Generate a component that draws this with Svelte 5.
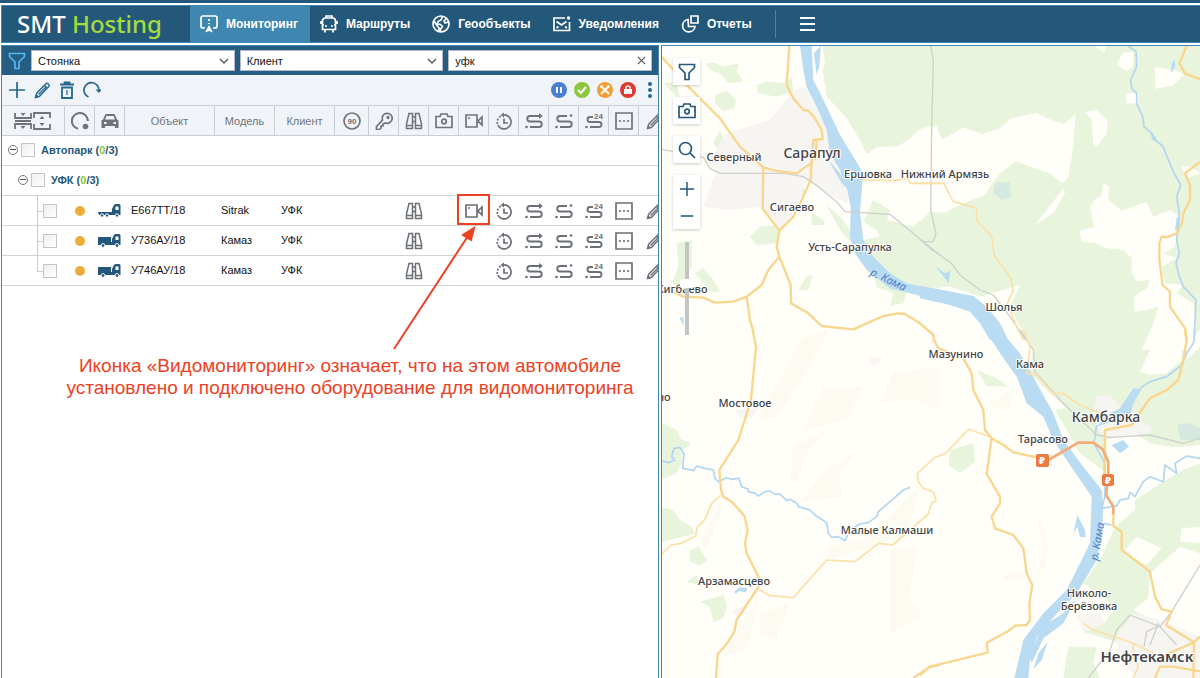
<script lang="ts">
    type Tile = {
        x: number
        y: number
        woods?: string[]
        clear?: string[]
        pale?: string[]
        urban?: string[]
        water?: string[]
        streams?: string[]
        minor?: string[]
        rails?: string[]
        roads?: string[]
        tolls?: string[]
    }

    const nav = [
        { icon: 'monitor', label: 'Мониторинг' },
        { icon: 'bus', label: 'Маршруты' },
        { icon: 'globe', label: 'Геообъекты' },
        { icon: 'mail', label: 'Уведомления' },
        { icon: 'report', label: 'Отчеты' }
    ]

    const columns = [
        { icon: 'speed', title: 'Скорость' },
        { icon: 'key', title: 'Зажигание' },
        { icon: 'binoculars', title: 'Следить' },
        { icon: 'camera', title: 'Фото' },
        { icon: 'video', title: 'Видеомониторинг' },
        { icon: 'history', title: 'История' },
        { icon: 'route', title: 'Маршрут' },
        { icon: 'track', title: 'Трек' },
        { icon: 'track24', title: 'Трек за сутки' },
        { icon: 'more', title: 'Ещё' },
        { icon: 'pencil', title: 'Изменить' }
    ]

    const vehicles = [
        { plate: 'Е667ТТ/18', model: 'Sitrak', client: 'УФК', truck: 'tractor', video: true },
        { plate: 'У736АУ/18', model: 'Камаз', client: 'УФК', truck: 'truck', video: false },
        { plate: 'У746АУ/18', model: 'Камаз', client: 'УФК', truck: 'truck', video: false }
    ]

    const hiddenInRow = ['speed', 'key', 'camera']

    let active = $state('Мониторинг')
    let query = $state('уфк')
    let zoom = $state(44)

    // Tile geometry is stored at three units per pixel
    const tiles: Tile[] = [
        {
            x: 660, y: 40,
            woods: [
                '488,18 840,18 840,255 810,258 775,270 745,300 715,318 650,322 620,342 600,300 560,235 530,200 500,170 488,90 495,70',
                '138,70 165,68 190,80 235,70 230,95 250,125 205,130 180,100 150,90',
                '165,165 200,152 228,180 222,205 190,213 165,190',
                '290,135 320,125 375,130 395,112 400,155 350,170 295,160',
                '298,275 340,262 395,270 402,300 380,325 340,330 300,300',
                '180,270 205,330 245,345 180,335 160,310',
                '335,440 370,428 425,430 440,460 400,480 385,500 340,470',
                '270,590 300,560 350,555 362,580 350,610 290,615',
                '500,495 540,530 570,570 575,610 540,570',
                '455,515 490,540 495,555 455,555',
                '415,750 440,708 458,705 445,750',
                '105,700 130,685 160,720 180,755 150,755',
                '50,610 95,600 95,680 60,740 35,730 55,680',
                '10,130 50,125 60,180 30,150',
                '640,480 690,510 680,540 760,560 800,520 840,510 840,745 760,740 700,715 650,680 610,600 660,590 650,570 610,545',
                '640,690 665,700 740,755 730,790 690,798 700,760 650,740'
            ],
            urban: ['385,170 420,140 480,150 500,230 560,330 600,400 560,490 500,460 440,420 410,500 360,575 310,500 200,510 130,500 150,440 170,390 120,340 160,345 200,280 330,240 370,190'],
            water: [
                '420,18 455,18 460,120 500,200 540,285 580,350 610,400 606,440 600,520 610,600 640,650 690,700 740,730 840,752 840,784 770,765 690,745 620,690 585,640 570,590 572,500 562,450 540,390 510,340 500,270 470,200 440,140 430,90',
                '482,18 478,80 470,105 462,40',
                '505,360 540,400 575,460 545,430'
            ],
            minor: ['605,420 700,422 740,415 752,430 840,430'],
            rails: [
                '5,328 40,335 130,352 150,385 180,400 375,400 430,410 475,440 530,485 555,515 690,523 790,605 840,645',
                '812,18 820,60 815,260 812,510 828,580 820,605 790,605'
            ],
            roads: [
                '5,50 80,135 180,235 240,320 310,382 350,393 410,400 455,368 460,300 488,297 485,270 465,235 445,212 430,210 400,175 380,135 388,18',
                '310,382 308,505 330,535 358,572 400,530 425,480 452,420 455,368',
                '462,300 470,300 466,360',
                '358,572 350,620 358,650 392,735 393,790 445,820 485,858 580,868 620,850 670,828 715,820 735,822 780,850 820,885 822,903',
                '358,650 325,690 305,735 260,770 220,785 165,788 130,773 70,770 40,755',
                '260,770 270,840 280,875'
            ]
        },
        {
            x: 920, y: 40,
            woods: ['30,18 840,18 840,900 320,900 270,800 300,735 180,770 90,740 30,740'],
            clear: [
                '0,268 50,255 65,300 130,262 188,282 240,265 275,235 350,218 380,235 430,252 467,222 462,290 455,350 445,410 427,430 390,400 287,365 240,400 210,440 195,465 130,490 75,518 30,515 0,545',
                '495,215 530,210 562,240 560,280 530,322 520,310 515,240',
                '608,38 640,35 638,80 620,95 600,80 590,72',
                '705,80 780,95 790,105 760,135 705,147',
                '618,160 655,160 655,190 620,190',
                '525,18 556,18 553,38',
                '478,572 522,560 510,500 522,480 545,465 550,430 568,440 565,480 605,512 680,485 700,530 750,510 785,535 775,560 765,620 730,640 770,655 725,680 735,730 790,735 770,760 820,790 835,930 665,930 700,850 715,800 680,810 645,815 640,770 680,745 690,720 650,725 635,700 635,655 610,630 560,625 530,610 485,605',
                '430,445 435,460 400,520 345,555 380,510',
                '785,380 815,380 840,400 800,415'
            ],
            water: [
                '0,737 70,750 160,768 200,800 240,850 265,900 210,900 180,850 150,815 90,795 0,775',
                '45,678 75,700 92,692 86,728',
                '755,70 765,58 765,80 753,100',
                '690,275 708,290 708,305 696,298',
                '770,535 782,530 775,570 765,570'
            ],
            streams: ['625,18 648,35 650,80 632,120 635,145 650,160 650,190 668,230 672,260 695,280 705,300 728,318 760,395 782,435 770,470 778,520 770,600 778,640 768,670 778,710 790,740 828,780 822,900'],
            minor: ['0,430 72,430 98,483 170,505 170,540 215,590 222,645 270,710 280,750 262,790 290,860 310,900'],
            rails: ['0,598 30,625 95,670 120,705 180,750 220,765 270,830 318,900'],
            roads: [
                '800,18 778,70 795,100 840,118',
                '840,365 795,400 810,435 810,480 790,520 785,550 770,580 740,592 725,590 718,610 718,660 728,735 750,755 750,800 795,865 800,900'
            ]
        },
        {
            x: 660, y: 330,
            woods: [
                '5,278 50,300 65,330 92,335 85,350 65,360 65,400 50,430 5,448',
                '5,532 40,540 60,570 95,590 107,612 60,622 5,638',
                '90,660 115,652 142,690 120,707 90,695',
                '80,755 110,735 115,765',
                '120,815 190,795 202,830 190,865 160,877 150,830'
            ],
            pale: [
                '290,270 430,20 510,0 400,190 350,260',
                '430,300 490,170 610,170 560,270',
                '390,455 400,350 500,300 440,370 410,455',
                '660,215 700,130 840,110 840,240 760,210',
                '420,515 490,430 590,360 540,430 545,500',
                '690,650 775,650 745,800 790,860 690,910',
                '120,640 190,500 180,560 140,655',
                '300,850 390,820 350,930 300,910',
                '180,980 300,800 260,960',
                '500,655 620,620 780,470 740,620 500,690'
            ],
            urban: ['225,240 290,235 275,265 240,262', '220,840 250,830 260,850 230,860', '625,82 668,85 640,110'],
            water: ['222,785 240,772 262,775 258,787 235,783 228,792', '58,-36 70,-40 72,-10'],
            streams: ['5,393 25,398 45,390 35,380 42,355 60,352 72,372 68,415 85,418 100,422 110,408 135,415 160,420 165,445 175,455 200,443 215,448 237,445 245,470 265,478 265,485 285,490 295,498 315,485 330,483 345,493 360,492 380,512 390,508 410,520 415,530 450,540 465,555 500,578 505,610 515,622 535,620 555,632 570,600 600,582 625,578 650,560 655,545 690,515 730,480 750,472'],
            minor: [
                '183,495 155,520 135,568 112,592 107,618 65,640 33,645 5,672',
                '297,778 330,797 400,803 500,690 585,695 655,640 698,645 805,552 815,520 828,512 820,485 790,475 775,455 772,430 825,382'
            ],
            roads: [
                '278,0 288,50 273,210 235,330 178,420 183,480 190,500 215,515 253,557 263,600 255,640 260,670 297,745 297,768 230,870 223,905 200,942 173,972 168,1044',
                '760,1044 810,1010 840,1005'
            ]
        },
        {
            x: 920, y: 330,
            woods: [
                '290,0 840,0 840,345 760,352 690,340 640,305 560,330 560,430 480,370 405,240 440,235 390,190 330,130 340,60',
                '840,400 790,420 730,455 645,510 645,540 585,590 545,680 490,760 590,830 555,875 490,905 600,940 600,900 680,860 690,730 780,650 840,670',
                '90,360 160,340 165,395 120,430 85,405',
                '170,120 230,145 265,170 200,168',
                '445,950 530,950 520,1000 540,1044 430,1044'
            ],
            clear: [
                '720,0 785,0 785,90 740,130 690,135 660,125 690,60',
                '800,40 840,0 840,50 800,90',
                '650,620 725,655 680,705 610,665',
                '785,595 840,590 840,640 780,635',
                '640,840 690,800 700,730 840,700 840,900 740,890'
            ],
            pale: ['250,740 310,720 310,745 250,750', '350,560 380,610 380,710 350,730 370,660', '200,230 280,170 270,240'],
            urban: [
                '530,200 570,195 600,230 640,270 695,290 690,310 560,320 535,300 520,250',
                '640,850 720,870 840,920 840,1044 650,1044 600,990 590,920',
                '470,855 540,850 555,880 490,908'
            ],
            water: [
                '195,0 240,0 300,70 400,250 430,330 490,410 545,480 550,530 545,620 530,690 470,790 420,840 350,920 330,990 325,1044 283,1044 310,930 370,850 440,780 480,700 510,640 515,500 440,390 400,330 370,260 320,220 290,140 240,70',
                '470,805 430,880 370,925 335,1000 328,980 365,890 430,850',
                '383,935 365,990 340,1018 355,970',
                '560,255 600,235 640,175 665,178 640,220 630,260 590,270 530,290',
                '472,555 495,600 497,622 480,620 472,590 460,612',
                '575,345 610,330 627,350 600,370',
                '400,270 418,300 400,305'
            ],
            streams: [
                '660,175 690,155 740,140 785,105 800,70 820,40 825,0',
                '545,535 590,528 600,510 625,505 630,487 645,500 670,455 690,440 730,455 735,405 770,430 765,400 800,378 840,385',
                '530,285 522,340 555,400 555,500 545,535',
                '550,580 575,585'
            ],
            minor: [
                '45,382 75,372 145,298 215,322',
                '310,0 330,50 320,130 350,135 400,190 430,190 480,225 530,245 555,270',
                '490,880 520,900 640,940 700,970',
                '640,940 640,980 655,1010 640,1044'
            ],
            rails: [
                '300,0 340,60 345,125 430,220 530,315 570,322 690,315 790,340 840,325',
                '840,705 755,845 720,890 630,855 590,900 570,960 505,1044',
                '720,885 680,905 672,950',
                '715,880 690,945',
                '720,890 770,945'
            ],
            roads: [
                '41,28 55,55 130,85 155,130 160,180 190,240 195,300 215,325 250,345 280,367 350,382',
                '215,325 210,360 200,432 240,500 240,520 215,560 225,595 280,615 310,655 320,730 337,765 328,820 330,870 320,885 285,887 270,900 200,938 203,968 30,1010 0,1035',
                '553,440 555,300 635,285 665,240 690,205 740,180 775,150 790,90 800,30 795,0',
                '580,550 580,588 605,605 605,660 690,725 705,800 725,838 755,845 738,885 822,937 840,920',
                '735,975 822,937 820,1044',
                '840,1024 760,1010 720,1010 705,1044'
            ],
            tolls: ['385,390 475,338 520,338 548,358 565,395 565,430 558,495 580,530 580,553']
        }
    ]

    const towns = [
        { name: 'Северный', x: 734, y: 161 },
        { name: 'Сарапул', x: 812, y: 158, size: 'town' },
        { name: 'Ершовка', x: 868, y: 178 },
        { name: 'Нижний Армязь', x: 945, y: 178 },
        { name: 'Сигаево', x: 792, y: 211 },
        { name: 'Усть-Сарапулка', x: 850, y: 251 },
        { name: 'Кигбаево', x: 682, y: 293 },
        { name: 'Шолья', x: 1004, y: 311 },
        { name: 'Мазунино', x: 956, y: 358 },
        { name: 'Кама', x: 1030, y: 368 },
        { name: 'Мостовое', x: 745, y: 407 },
        { name: 'но', x: 664, y: 401 },
        { name: 'Камбарка', x: 1106, y: 422, size: 'town' },
        { name: 'Тарасово', x: 1043, y: 443 },
        { name: 'Малые Калмаши', x: 887, y: 534 },
        { name: 'Арзамасцево', x: 734, y: 585 },
        { name: 'Николо-', x: 1089, y: 597 },
        { name: 'Берёзовка', x: 1089, y: 610 },
        { name: 'Нефтекамск', x: 1147, y: 662, size: 'city' }
    ]
</script>

{#snippet icon(name: string)}
    <svg class="icon" viewBox="0 0 18 18" aria-hidden="true">
        <use href="#i-{name}" />
        {#if name === 'speed'}<text class="glyph" x="9" y="12" text-anchor="middle">90</text>{/if}
        {#if name === 'track24'}<text class="glyph" x="9" y="7">24</text>{/if}
    </svg>
{/snippet}

{#snippet layer(key: string, tag: string)}
    {#each tiles as tile}
        <g class={key} transform="translate({tile.x} {tile.y}) scale({1 / 3})">
            {#each tile[key] ?? [] as points}
                {#if tag === 'area'}<polygon {points} />{:else}<polyline {points} />{/if}
            {/each}
        </g>
    {/each}
{/snippet}

<svg class="sprite" aria-hidden="true">
    <symbol id="i-monitor" viewBox="0 0 18 18">
        <path d="M5 13H3a2 2 0 0 1-2-2V3a2 2 0 0 1 2-2h12a2 2 0 0 1 2 2v8a2 2 0 0 1-2 2h-2M9 4v2M9 8v1" />
        <path class="solid" d="M9 10l4 7.500-4-1.500-4 1.500z" />
    </symbol>
    <symbol id="i-bus" viewBox="0 0 18 18">
        <path d="M6 2.500V1h6v1.500M5 3h8a3 3 0 0 1 2.500 3v8.500h-13V6A3 3 0 0 1 5 3zM2.500 10H4M14 10h1.500M1 6v3M17 6v3M5 15v2.500M13 15v2.500" />
        <circle class="solid" cx="6" cy="11" r="1" /><circle class="solid" cx="12" cy="11" r="1" />
    </symbol>
    <symbol id="i-globe" viewBox="0 0 18 18">
        <circle cx="9" cy="9" r="8" />
        <path d="M10.500 1.500L9 5l-3 1.500L5.500 9l3 .5 2 2-2 2.500v3M2 6l3 4.500L7 13v3.500M16.500 7L13 8l-1-2 2.500-2.500" />
    </symbol>
    <symbol id="i-mail" viewBox="0 0 18 18">
        <path d="M12 3H1v12.500h15.500V7M3.500 6.500L8.500 10l5-3.500M3.500 13l2-1.500M14 13l-2-1.500" />
        <circle class="solid" cx="15.500" cy="3" r="1.700" />
    </symbol>
    <symbol id="i-report" viewBox="0 0 18 18">
        <path d="M10 1h7v7h-7zM7 4.500a6.200 6.200 0 1 0 7 7H7.500z" />
    </symbol>
    <symbol id="i-filter" viewBox="0 0 18 18">
        <path d="M1.500 1.500h15v3L11 10v6.500H7V10L1.500 4.500z" />
    </symbol>
    <symbol id="i-plus" viewBox="0 0 18 18"><path d="M9 1v16M1 9h16" /></symbol>
    <symbol id="i-minus" viewBox="0 0 18 18"><path d="M2 9h14" /></symbol>
    <symbol id="i-pencil" viewBox="0 0 18 18">
        <path stroke-width="1.400" d="M2.500 16.500l1.200-4.300L13 2.800q1-1 2 0l.8.8q1 1 0 2L6.500 15.300zM11.500 4.500l2.700 2.700M5.500 13.500l7.500-7.500" />
        <path class="solid" d="M2 17l1-4 3.500 3z" />
    </symbol>
    <symbol id="i-trash" viewBox="0 0 18 18">
        <path stroke-width="1.800" d="M4 6.500h10V17H4zM2 3.500h14M6.500 3V1.500h5V3" /><path stroke-width="1.200" d="M9 9v5" />
    </symbol>
    <symbol id="i-refresh" viewBox="0 0 18 18">
        <path d="M5.500 16A7.500 7.500 0 1 1 16 9.500" /><path class="solid" d="M12.500 8.500h6L16 12z" />
    </symbol>
    <symbol id="i-ring" viewBox="0 0 18 18">
        <path stroke-width="2" d="M7 16.800A8 8 0 1 1 16.900 9" /><circle class="solid" cx="14.500" cy="14.500" r="2.800" />
    </symbol>
    <symbol id="i-car" viewBox="0 0 18 18">
        <path class="hole" fill-rule="evenodd" d="M4.500 2h9l2.500 5.500 1.500 1V16h-3.500v-2H4v2H.5V8.500l1.500-1zM5.500 4L4 7.500h10L12.500 4zM3 10v2h2.500v-2zM12.500 10v2H15v-2z" />
    </symbol>
    <symbol id="i-speed" viewBox="0 0 18 18"><circle cx="9" cy="9" r="8" /></symbol>
    <symbol id="i-key" viewBox="0 0 18 18">
        <path d="M7.500 8A5 5 0 1 1 10.500 11L8 12v2H6v2l-1.500 1.500H1.500v-3z" /><circle cx="13" cy="5.500" r=".8" />
    </symbol>
    <symbol id="i-binoculars" viewBox="0 0 18 18">
        <path stroke-width="1.500" d="M4 1.500h3.500v15h-6V12zM14 1.500h-3.500v15h6V12zM7.500 5h3M7.500 9.500h3M1.500 13.500h6M10.500 13.500h6" />
    </symbol>
    <symbol id="i-camera" viewBox="0 0 18 18">
        <path d="M1 4.500h4l1-2.500h6l1 2.500h4V15.500H1z" /><circle cx="9" cy="9.500" r="2.300" />
    </symbol>
    <symbol id="i-video" viewBox="0 0 18 18">
        <path d="M1 3h11v12H1zM13 9l4-4v8z" /><circle class="solid" cx="4" cy="6" r="1" />
    </symbol>
    <symbol id="i-history" viewBox="0 0 18 18">
        <path d="M8 3a7 7 0 1 1-5.200 10M9 6.500v4.500h4" />
        <path class="solid" d="M9 .5v5L5.500 3z" />
        <path stroke-dasharray="2 1.500" d="M2.500 12A7 7 0 0 1 6 4" />
    </symbol>
    <symbol id="i-route" viewBox="0 0 18 18">
        <path stroke-width="1.900" d="M15 4H5a2.700 2.700 0 0 0 0 5.500h9a2.700 2.700 0 0 1 0 5.500H5" />
        <path class="solid" d="M14 1l3.800 3L14 7z" /><circle class="solid" cx="1.500" cy="15" r="1.300" />
    </symbol>
    <symbol id="i-track" viewBox="0 0 18 18">
        <path stroke-width="1.900" d="M12 4H5a2.700 2.700 0 0 0 0 5.500h9a2.700 2.700 0 0 1 0 5.500H5" />
        <circle class="solid" cx="16" cy="3.500" r="1.300" /><circle class="solid" cx="1.500" cy="15" r="1.300" />
    </symbol>
    <symbol id="i-track24" viewBox="0 0 18 18">
        <path stroke-width="1.900" d="M8 5H5a2.300 2.300 0 0 0 0 5h9a2.500 2.500 0 0 1 0 5H5" />
        <circle class="solid" cx="1.500" cy="15" r="1.300" />
    </symbol>
    <symbol id="i-more" viewBox="0 0 18 18">
        <path d="M1 1h16v16H1z" />
        <circle class="solid" cx="5" cy="9" r="1.100" /><circle class="solid" cx="9" cy="9" r="1.100" /><circle class="solid" cx="13" cy="9" r="1.100" />
    </symbol>
    <symbol id="i-search" viewBox="0 0 18 18"><circle cx="7.500" cy="7.500" r="6" /><path d="M12 12l5 5" /></symbol>
    <symbol id="i-fold" viewBox="0 0 38 18">
        <path d="M1 1v5h16V1M1 17v-5h16v5M1 9h16M20 6V1h16v5M20 12v5h16v-5" />
        <path class="solid" d="M6.500 1h5L9 4zM6.500 14h5L9 17zM25.500 7h5L28 4zM25.500 11h5L28 14z" />
    </symbol>
    <symbol id="i-tractor" viewBox="0 0 24 14">
        <path class="body" d="M0 8h14V5l2-4q.3-1 2-1h3q1.500 0 1.500 1.500V11H1z" /><path class="gap" d="M17.500 2.500h3V6h-3z" />
        <circle class="wheel" cx="4" cy="11.500" r="1.700" /><circle class="wheel" cx="9" cy="11.500" r="1.700" /><circle class="wheel" cx="19" cy="11.500" r="1.700" />
    </symbol>
    <symbol id="i-truck" viewBox="0 0 24 14">
        <path class="body" d="M0 3h13v5h1V5l2-4q.3-1 2-1h3q1.500 0 1.500 1.500V11H0z" /><path class="gap" d="M17.500 2.500h3V6h-3z" />
        <circle class="wheel" cx="5" cy="11.500" r="1.900" /><circle class="wheel" cx="19" cy="11.500" r="1.900" />
    </symbol>
</svg>

<div class="app">
    <header class="top">
        <a class="logo" href="/">SMT <span>Hosting</span></a>
        <nav>
            {#each nav as item}
                <button class="nav-item" class:active={active === item.label} onclick={() => (active = item.label)}>
                    {@render icon(item.icon)}
                    {item.label}
                </button>
            {/each}
        </nav>
        <button class="burger" aria-label="Меню"><span></span><span></span><span></span></button>
    </header>

    <main>
        <section class="panel">
            <!-- Filters -->
            <div class="filters">
                {@render icon('filter')}
                <label class="field">
                    <select aria-label="Статус"><option>Стоянка</option></select>
                    <svg class="chevron" viewBox="0 0 10 6"><path d="M1 1l4 4 4-4" /></svg>
                </label>
                <label class="field">
                    <select aria-label="Группировка"><option>Клиент</option></select>
                    <svg class="chevron" viewBox="0 0 10 6"><path d="M1 1l4 4 4-4" /></svg>
                </label>
                <div class="field">
                    <input type="text" aria-label="Поиск" spellcheck="false" bind:value={query} />
                    <button class="clear-btn" aria-label="Очистить" onclick={() => (query = '')}>
                        <svg viewBox="0 0 10 10"><path d="M1 1l8 8M9 1L1 9" /></svg>
                    </button>
                </div>
            </div>

            <!-- Toolbar -->
            <div class="toolbar">
                <button aria-label="Добавить">{@render icon('plus')}</button>
                <button aria-label="Изменить">{@render icon('pencil')}</button>
                <button aria-label="Удалить">{@render icon('trash')}</button>
                <button aria-label="Обновить">{@render icon('refresh')}</button>
                <div class="states">
                    <button class="state pause" aria-label="Пауза"><svg viewBox="0 0 16 16"><path d="M6 5v6M10 5v6" /></svg></button>
                    <button class="state ok" aria-label="Работает"><svg viewBox="0 0 16 16"><path d="M4 8l3 3 5-6" /></svg></button>
                    <button class="state repair" aria-label="Ремонт"><svg viewBox="0 0 16 16"><path d="M4 4l8 8M12 4l-8 8M3.500 5.500l2-2M10.500 3.500l2 2" /></svg></button>
                    <button class="state lock" aria-label="Блокировка"><svg viewBox="0 0 16 16"><path class="white" d="M4 7h8v5H4z" /><path class="thin" d="M6 7V5q2-2 4 0v2" /></svg></button>
                    <button class="dots" aria-label="Ещё"><span></span><span></span><span></span></button>
                </div>
            </div>

            <!-- Objects -->
            <table>
                <colgroup>
                    <col class="w-tree" /><col class="w-icon" /><col class="w-icon" />
                    <col class="w-object" /><col class="w-text" /><col class="w-text" /><col class="w-speed" />
                    {#each columns.slice(1) as _}<col class="w-icon" />{/each}
                </colgroup>
                <thead>
                    <tr>
                        <th><svg class="fold" viewBox="0 0 38 18"><use href="#i-fold" /></svg></th>
                        <th>{@render icon('ring')}</th>
                        <th>{@render icon('car')}</th>
                        <th>Объект</th>
                        <th>Модель</th>
                        <th>Клиент</th>
                        {#each columns as col}
                            <th title={col.title}>{@render icon(col.icon)}</th>
                        {/each}
                    </tr>
                </thead>
                <tbody>
                    {#each ['Автопарк', 'УФК'] as group, level}
                        <tr class="group">
                            <td colspan="17">
                                <div class="group-row" class:nested={level === 1}>
                                    <button class="expander" aria-label="Свернуть"></button>
                                    <input type="checkbox" id="group-{level}" />
                                    <label for="group-{level}">{group} (<b>0</b>/3)</label>
                                </div>
                            </td>
                        </tr>
                    {/each}
                    {#each vehicles as v}
                        <tr class="vehicle">
                            <td class="tree"><input type="checkbox" aria-label={v.plate} /></td>
                            <td class="mid"><span class="dot"></span></td>
                            <td class="mid"><svg class="truck" viewBox="0 0 24 14"><use href="#i-{v.truck}" /></svg></td>
                            <td>{v.plate}</td>
                            <td>{v.model}</td>
                            <td>{v.client}</td>
                            {#each columns as col}
                                <td class="mid" class:marked={col.icon === 'video' && v.video}>
                                    {#if !hiddenInRow.includes(col.icon) && (col.icon !== 'video' || v.video)}
                                        <button aria-label={col.title}>{@render icon(col.icon)}</button>
                                    {/if}
                                </td>
                            {/each}
                        </tr>
                    {/each}
                </tbody>
            </table>

            <!-- Callout -->
            <svg class="arrow" viewBox="0 0 84 126" aria-hidden="true">
                <path d="M2 123L76 10" /><path class="head" d="M82 2L79 14 71 9z" />
            </svg>
            <p class="callout">
                Иконка «Видомониторинг» означает, что на этом автомобиле<br />
                установлено и подключено оборудование для видомониторинга
            </p>
        </section>

        <section class="map">
            <svg class="canvas" viewBox="662 46 538 632" preserveAspectRatio="xMinYMin slice">
                {@render layer('pale', 'area')}
                {@render layer('woods', 'area')}
                {@render layer('clear', 'area')}
                {@render layer('urban', 'area')}
                <polygon class="pond" points="995,183 1010,182 1011,197 1002,200 993,193" />
                <polygon class="pond" points="1177,425 1187,423 1200,428 1200,440 1180,440" />
                {@render layer('water', 'area')}
                {@render layer('streams', 'line')}
                {@render layer('rails', 'line')}
                {@render layer('minor', 'line')}
                {@render layer('roads', 'line')}
                {@render layer('tolls', 'line')}
                <g class="toll-sign">
                    <rect x="1036" y="454" width="13" height="13" rx="2" /><text x="1042" y="464">₽</text>
                    <rect x="1102" y="474" width="12" height="12" rx="2" /><text x="1108" y="484">₽</text>
                </g>
                {#each towns as town}
                    <text class="place {town.size ?? ''}" x={town.x} y={town.y}>{town.name}</text>
                {/each}
                <text class="river" transform="translate(887 283) rotate(25)">р. Кама</text>
                <text class="river" transform="translate(1101 542) rotate(-80)">р. Кама</text>
            </svg>
            <div class="controls">
                <button class="tile" aria-label="Фильтр">{@render icon('filter')}</button>
                <button class="tile" aria-label="Снимок">{@render icon('camera')}</button>
                <button class="tile" aria-label="Найти">{@render icon('search')}</button>
                <div class="zoom">
                    <button aria-label="Приблизить" onclick={() => (zoom += 5)}>{@render icon('plus')}</button>
                    <button aria-label="Отдалить" onclick={() => (zoom -= 5)}>{@render icon('minus')}</button>
                </div>
                <input class="slider" type="range" aria-label="Масштаб" bind:value={zoom} />
            </div>
        </section>
    </main>
</div>

<style>
    :global(body) {
        background: #fff;
        color: #111;
        font: 11px/16px "Liberation Sans", Arial, sans-serif;
    }
    .app {
        display: flex;
        flex-direction: column;
        min-height: 100vh;
        box-sizing: border-box;
        border-top: 3px solid #24587b;
        padding-left: 1px;
        overflow: hidden;
    }
    button {
        display: flex;
        align-items: center;
        justify-content: center;
        padding: 0;
        border: 0;
        background: none;
        color: inherit;
        font: inherit;
        cursor: pointer;
    }
    .sprite { position: absolute; width: 0; height: 0; }
    .icon {
        display: block;
        width: 18px;
        height: 18px;
        flex-shrink: 0;
        fill: none;
        stroke: currentColor;
        stroke-width: 1.7;
    }
    .solid { fill: currentColor; stroke: none; }
    .hole { fill: currentColor; stroke: none; }
    .glyph {
        fill: currentColor;
        stroke: none;
        font: bold 8px "Liberation Sans", Arial, sans-serif;
    }

    /* ── Header ── */
    .top {
        display: flex;
        align-items: stretch;
        height: 36px;
        margin-top: 2px;
        border: 1px solid #3f86b1;
        border-right: 0;
        background: #24587b;
        color: #fff;
    }
    .logo {
        width: 188px;
        box-sizing: border-box;
        padding-left: 15px;
        font: 500 24px/36px "Noto Sans", "Open Sans", sans-serif;
        color: #fff;
        text-decoration: none;
        white-space: nowrap;
    }
    .logo span { color: #a5dc3c; }
    nav { display: flex; margin-right: 11px; }
    .nav-item {
        gap: 8px;
        padding: 0 12px 0 10px;
        font-size: 12px;
        font-weight: bold;
    }
    .nav-item.active { background: #3f86b1; }
    .burger {
        flex-direction: column;
        gap: 4px;
        margin: 4px 0;
        padding: 0 24px;
        border-left: 1px solid #3f86b1;
    }
    .burger span { width: 15px; height: 2px; background: #fff; }

    main {
        display: grid;
        grid-template-columns: 658fr 539fr;
        flex: 1;
        gap: 2px;
        margin-top: 2px;
    }

    /* ── Left panel ── */
    .panel {
        position: relative;
        min-width: 0;
        box-sizing: border-box;
        border: 1px solid #3f86b1;
        border-bottom: 0;
        overflow: hidden;
    }
    .filters {
        display: flex;
        align-items: center;
        gap: 5px;
        height: 29px;
        padding: 0 6px;
        background: #265d82;
    }
    .filters .icon { color: #53b7f5; }
    .field { position: relative; flex: 1; }
    .field select, .field input {
        display: block;
        width: 100%;
        height: 21px;
        box-sizing: border-box;
        padding: 0 6px;
        border: 1px solid #b5b8c8;
        border-radius: 0;
        background: #fff;
        color: #111;
        font: inherit;
        appearance: none;
    }
    .chevron {
        position: absolute;
        top: 8px;
        right: 6px;
        width: 10px;
        height: 6px;
        fill: none;
        stroke: #555;
        stroke-width: 1.3;
    }
    .clear-btn { position: absolute; top: 6px; right: 6px; }
    .clear-btn svg { width: 9px; height: 9px; fill: none; stroke: #555; stroke-width: 1.3; }

    .toolbar {
        display: flex;
        align-items: center;
        gap: 7px;
        height: 30px;
        padding: 0 6px;
        background: #f0f4f8;
        color: #24678f;
    }
    .states {
        display: flex;
        align-items: center;
        gap: 7px;
        margin-left: auto;
    }
    .state { width: 16px; height: 16px; border-radius: 50%; }
    .state svg { width: 16px; height: 16px; fill: none; stroke: #fff; stroke-width: 2; }
    .state .white { fill: #fff; stroke: none; }
    .state .thin { stroke-width: 1.4; }
    .pause { background: #4a80d4; }
    .ok { background: #8dc63f; }
    .repair { background: #f39c32; }
    .lock { background: #e03a30; }
    .dots { flex-direction: column; gap: 2px; margin-left: 5px; }
    .dots span { width: 4px; height: 4px; border-radius: 50%; background: #24678f; }

    /* ── Table ── */
    table {
        width: 667px;
        table-layout: fixed;
        border-collapse: separate;
        border-spacing: 0;
    }
    .w-tree { width: 63px; }
    .w-icon { width: 30px; }
    .w-object { width: 90px; }
    .w-text { width: 60px; }
    .w-speed { width: 34px; }
    th {
        height: 31px;
        box-sizing: border-box;
        padding: 0;
        border: solid #c9cdd1;
        border-width: 1px 1px 1px 0;
        background: #f0f4f8;
        color: #707478;
        font-weight: normal;
    }
    th .icon { margin: 0 auto; }
    .fold {
        display: block;
        width: 38px;
        height: 18px;
        margin: 0 auto;
        fill: none;
        stroke: #707478;
        stroke-width: 1.8;
    }
    td {
        height: 30px;
        box-sizing: border-box;
        padding: 0 0 2px 6px;
        border-bottom: 1px solid #d4d4d4;
    }
    td.mid { padding: 0; color: #6b6f76; }
    .mid button { margin: 0 auto; }
    input[type="checkbox"] {
        appearance: none;
        width: 14px;
        height: 14px;
        margin: 0;
        border: 1px solid #c4c4c4;
        background: linear-gradient(135deg, #eee, #fff);
    }
    .group-row {
        display: flex;
        align-items: center;
        color: #24587b;
        font-weight: bold;
    }
    .group-row label { margin-left: 6px; }
    .group-row b { color: #8dc63f; }
    .nested { padding-left: 10px; }
    .expander {
        width: 10px;
        height: 10px;
        box-sizing: border-box;
        margin-right: 3px;
        border: 1px solid #777;
        border-radius: 50%;
    }
    .expander::after { content: ""; width: 6px; height: 1px; background: #555; }
    td.tree { position: relative; padding: 0 0 0 41px; }
    .tree input { display: block; }
    .tree::before {
        content: "";
        position: absolute;
        top: 0;
        left: 35px;
        width: 6px;
        height: 15px;
        border: solid #ccc;
        border-width: 0 0 1px 1px;
    }
    .tree::after {
        content: "";
        position: absolute;
        top: 15px;
        bottom: -1px;
        left: 35px;
        border-left: 1px solid #ccc;
    }
    .vehicle:last-child .tree::after { display: none; }
    .dot {
        display: block;
        width: 10px;
        height: 10px;
        margin: 0 auto;
        border-radius: 50%;
        background: #ecab3b;
    }
    .truck { display: block; width: 24px; height: 14px; margin: 0 auto; }
    .body { fill: #24587b; stroke: none; }
    .gap { fill: #fff; stroke: none; }
    .wheel { fill: #24587b; stroke: #fff; stroke-width: 1; }
    .marked { position: relative; }
    .marked::after {
        content: "";
        position: absolute;
        inset: -2px -1px 0 -2px;
        border: 2px solid #ee4124;
        pointer-events: none;
    }

    /* ── Callout ── */
    .arrow {
        position: absolute;
        top: 180px;
        left: 390px;
        width: 84px;
        height: 126px;
        fill: none;
        stroke: #ee4124;
        stroke-width: 2;
    }
    .arrow .head { fill: #ee4124; }
    .callout {
        margin: 69px 0 0;
        padding-left: 40px;
        color: #ee4124;
        font-size: 19px;
        line-height: 22px;
        text-align: center;
    }

    /* ── Map ── */
    .map {
        position: relative;
        border: solid #3f86b1;
        border-width: 1px 0 0 1px;
        background: #fffef8;
        overflow: hidden;
    }
    .canvas { position: absolute; inset: 0; width: 100%; height: 100%; }
    .pale { fill: #fbfbf2; }
    .woods { fill: #e9f4dc; }
    .clear { fill: #fffef8; }
    .urban { fill: #f7f5f2; }
    .pond { fill: #d5e9e0; }
    .water { fill: #b9dcf3; }
    .streams, .rails, .minor, .roads, .tolls { fill: none; stroke-linejoin: round; }
    .streams { stroke: #b0d6f2; stroke-width: 5; }
    .rails { stroke: #cfcfcf; stroke-width: 4; }
    .minor { stroke: #fbe0a8; stroke-width: 5; }
    .roads { stroke: #f9d68d; stroke-width: 7; }
    .tolls { stroke: #f4ac77; stroke-width: 8; }
    .place {
        fill: #444;
        stroke: #fff;
        stroke-width: 2;
        stroke-linejoin: round;
        paint-order: stroke;
        font: 500 11px "Noto Sans", sans-serif;
        text-anchor: middle;
    }
    .place.town { font-size: 14px; }
    .place.city { font-size: 15px; font-weight: 600; }
    .river {
        fill: #4d7dc4;
        font: italic 11px "Noto Sans", sans-serif;
        text-anchor: middle;
    }
    .toll-sign rect { fill: #ee7a43; }
    .toll-sign text {
        fill: #fff;
        font: bold 9px "DejaVu Sans", sans-serif;
        text-anchor: middle;
    }
    .controls {
        position: absolute;
        top: 12px;
        left: 11px;
        display: flex;
        flex-direction: column;
        align-items: center;
        gap: 12px;
        color: #24587b;
    }
    .tile, .zoom {
        width: 27px;
        background: #fff;
        box-shadow: 0 1px 3px rgba(0, 0, 0, 0.2);
    }
    .tile { height: 27px; }
    .zoom button { width: 27px; height: 27px; }
    .zoom .icon { width: 16px; height: 16px; }
    .slider {
        appearance: none;
        writing-mode: vertical-lr;
        width: 14px;
        height: 93px;
        margin: 1px 0 0;
        background: linear-gradient(#c4c4c4, #c4c4c4) center / 4px 100% no-repeat;
    }
    .slider::-webkit-slider-thumb {
        appearance: none;
        width: 14px;
        height: 9px;
        border-radius: 2px;
        background: #fff;
    }
</style>
